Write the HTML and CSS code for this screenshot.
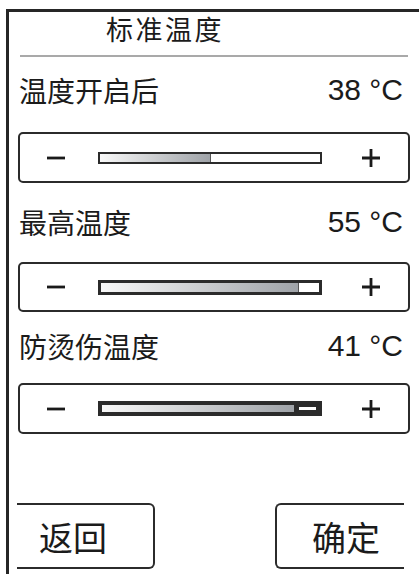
FILE: index.html
```html
<!DOCTYPE html>
<html lang="zh-CN">
<head>
    <meta charset="UTF-8">
    <meta name="viewport" content="width=device-width, initial-scale=1.0">
    <title>标准温度</title>
    <link rel="stylesheet" href="styles.css">
</head>
<body>
    <div class="screen">
        <div class="title">标准温度</div>
        <div class="divider"></div>

        <div class="setting setting-first">
            <div class="setting-head">
                <span class="name">温度开启后</span>
                <span class="value">38 °C</span>
            </div>
            <div class="slider">
                <svg class="step" viewBox="0 0 18 18"><path d="M0 9H18"/></svg>
                <div class="track">
                    <div class="fill" style="width: 111px"></div>
                    <div class="rest"></div>
                </div>
                <svg class="step" viewBox="0 0 18 18"><path d="M0 9H18M9 0V18"/></svg>
            </div>
        </div>

        <div class="setting">
            <div class="setting-head">
                <span class="name">最高温度</span>
                <span class="value">55 °C</span>
            </div>
            <div class="slider slider-short">
                <svg class="step" viewBox="0 0 18 18"><path d="M0 9H18"/></svg>
                <div class="track track-bold">
                    <div class="fill" style="width: 198px"></div>
                    <div class="rest"></div>
                </div>
                <svg class="step" viewBox="0 0 18 18"><path d="M0 9H18M9 0V18"/></svg>
            </div>
        </div>

        <div class="setting setting-last">
            <div class="setting-head">
                <span class="name">防烫伤温度</span>
                <span class="value">41 °C</span>
            </div>
            <div class="slider">
                <svg class="step" viewBox="0 0 18 18"><path d="M0 9H18"/></svg>
                <div class="track track-deep">
                    <div class="fill" style="width: 195px"></div>
                    <div class="rest"></div>
                </div>
                <svg class="step" viewBox="0 0 18 18"><path d="M0 9H18M9 0V18"/></svg>
            </div>
        </div>

        <div class="actions">
            <button class="btn btn-back">返回</button>
            <button class="btn btn-ok">确定</button>
        </div>
    </div>
</body>
</html>
```

FILE: styles.css
```css
body {
    margin: 0;
    padding: 0;
    background-color: #fff;
    color: #1b1b1b;
    font-family: "Liberation Sans", "Noto Sans CJK SC", sans-serif;
}
.screen {
    margin: 9px 0 0 6px;
    height: 565px;
    border-top: 3px solid #262626;
    border-left: 3px solid #262626;
    box-sizing: border-box;
}
.title {
    padding: 0 0 4px 97px;
    font-family: "Noto Sans CJK SC", sans-serif;
    font-size: 27px;
    letter-spacing: 2.5px;
    line-height: 34px;
}
.divider {
    height: 2px;
    margin: 5px 11px 0 11px;
    background-color: #a9a9a9;
}
.setting-head {
    display: flex;
    justify-content: space-between;
    align-items: center;
    height: 40px;
    margin-top: 21px;
    padding: 0 16px 5px 10px;
    box-sizing: border-box;
}
.setting-first .setting-head {
    margin-top: 15px;
}
.setting-last .setting-head {
    margin-top: 16px;
}
.name {
    font-family: "Noto Sans CJK SC", sans-serif;
    font-size: 28px;
}
.value {
    font-size: 30px;
}
.slider {
    display: flex;
    align-items: center;
    height: 51px;
    margin: 18px 9px 0 9px;
    padding-left: 27px;
    border: 2px solid #2b2b2b;
    border-radius: 5px;
    box-sizing: border-box;
}
.setting-first .slider {
    margin-top: 20px;
}
.setting-last .slider {
    margin-top: 15px;
}
.slider-short {
    height: 50px;
}
.step {
    width: 18px;
    height: 18px;
    fill: none;
    stroke: #1a1a1a;
    stroke-width: 2.8;
}
.track {
    display: flex;
    width: 224px;
    height: 12px;
    margin: 0 40px 0 33px;
    border: 2px solid #2b2b2b;
    box-sizing: border-box;
    background-color: #fff;
}
.track-bold {
    height: 15px;
    border-width: 3px;
}
.track-deep {
    height: 15px;
    border-width: 4px;
}
.fill {
    height: 100%;
    background: linear-gradient(to right, #f8f8f8, #9fa3a8);
    border-right: 1px solid #555;
    box-sizing: border-box;
}
.rest {
    flex: 1;
    background-color: #fff;
}
.track-deep .fill {
    border-right: 3px solid #2b2b2b;
}
.track-deep .rest {
    box-shadow: inset 0 0 0 2px #2b2b2b;
}
.actions {
    display: flex;
    justify-content: space-between;
    margin-top: 69px;
    padding: 0 15px 0 8px;
}
.btn {
    height: 66px;
    padding: 1px 0 0 0;
    border: 2px solid #2b2b2b;
    background-color: #fff;
    color: #1b1b1b;
    font-family: "Noto Sans CJK SC", sans-serif;
    font-size: 34px;
    line-height: 34px;
    text-align: left;
    box-sizing: border-box;
    vertical-align: top;
}
.btn-back {
    width: 138px;
    padding-left: 22px;
    border-left: none;
    border-radius: 0 6px 6px 0;
}
.btn-ok {
    width: 129px;
    padding-left: 35px;
    border-right: none;
    border-radius: 6px 0 0 6px;
}
```
